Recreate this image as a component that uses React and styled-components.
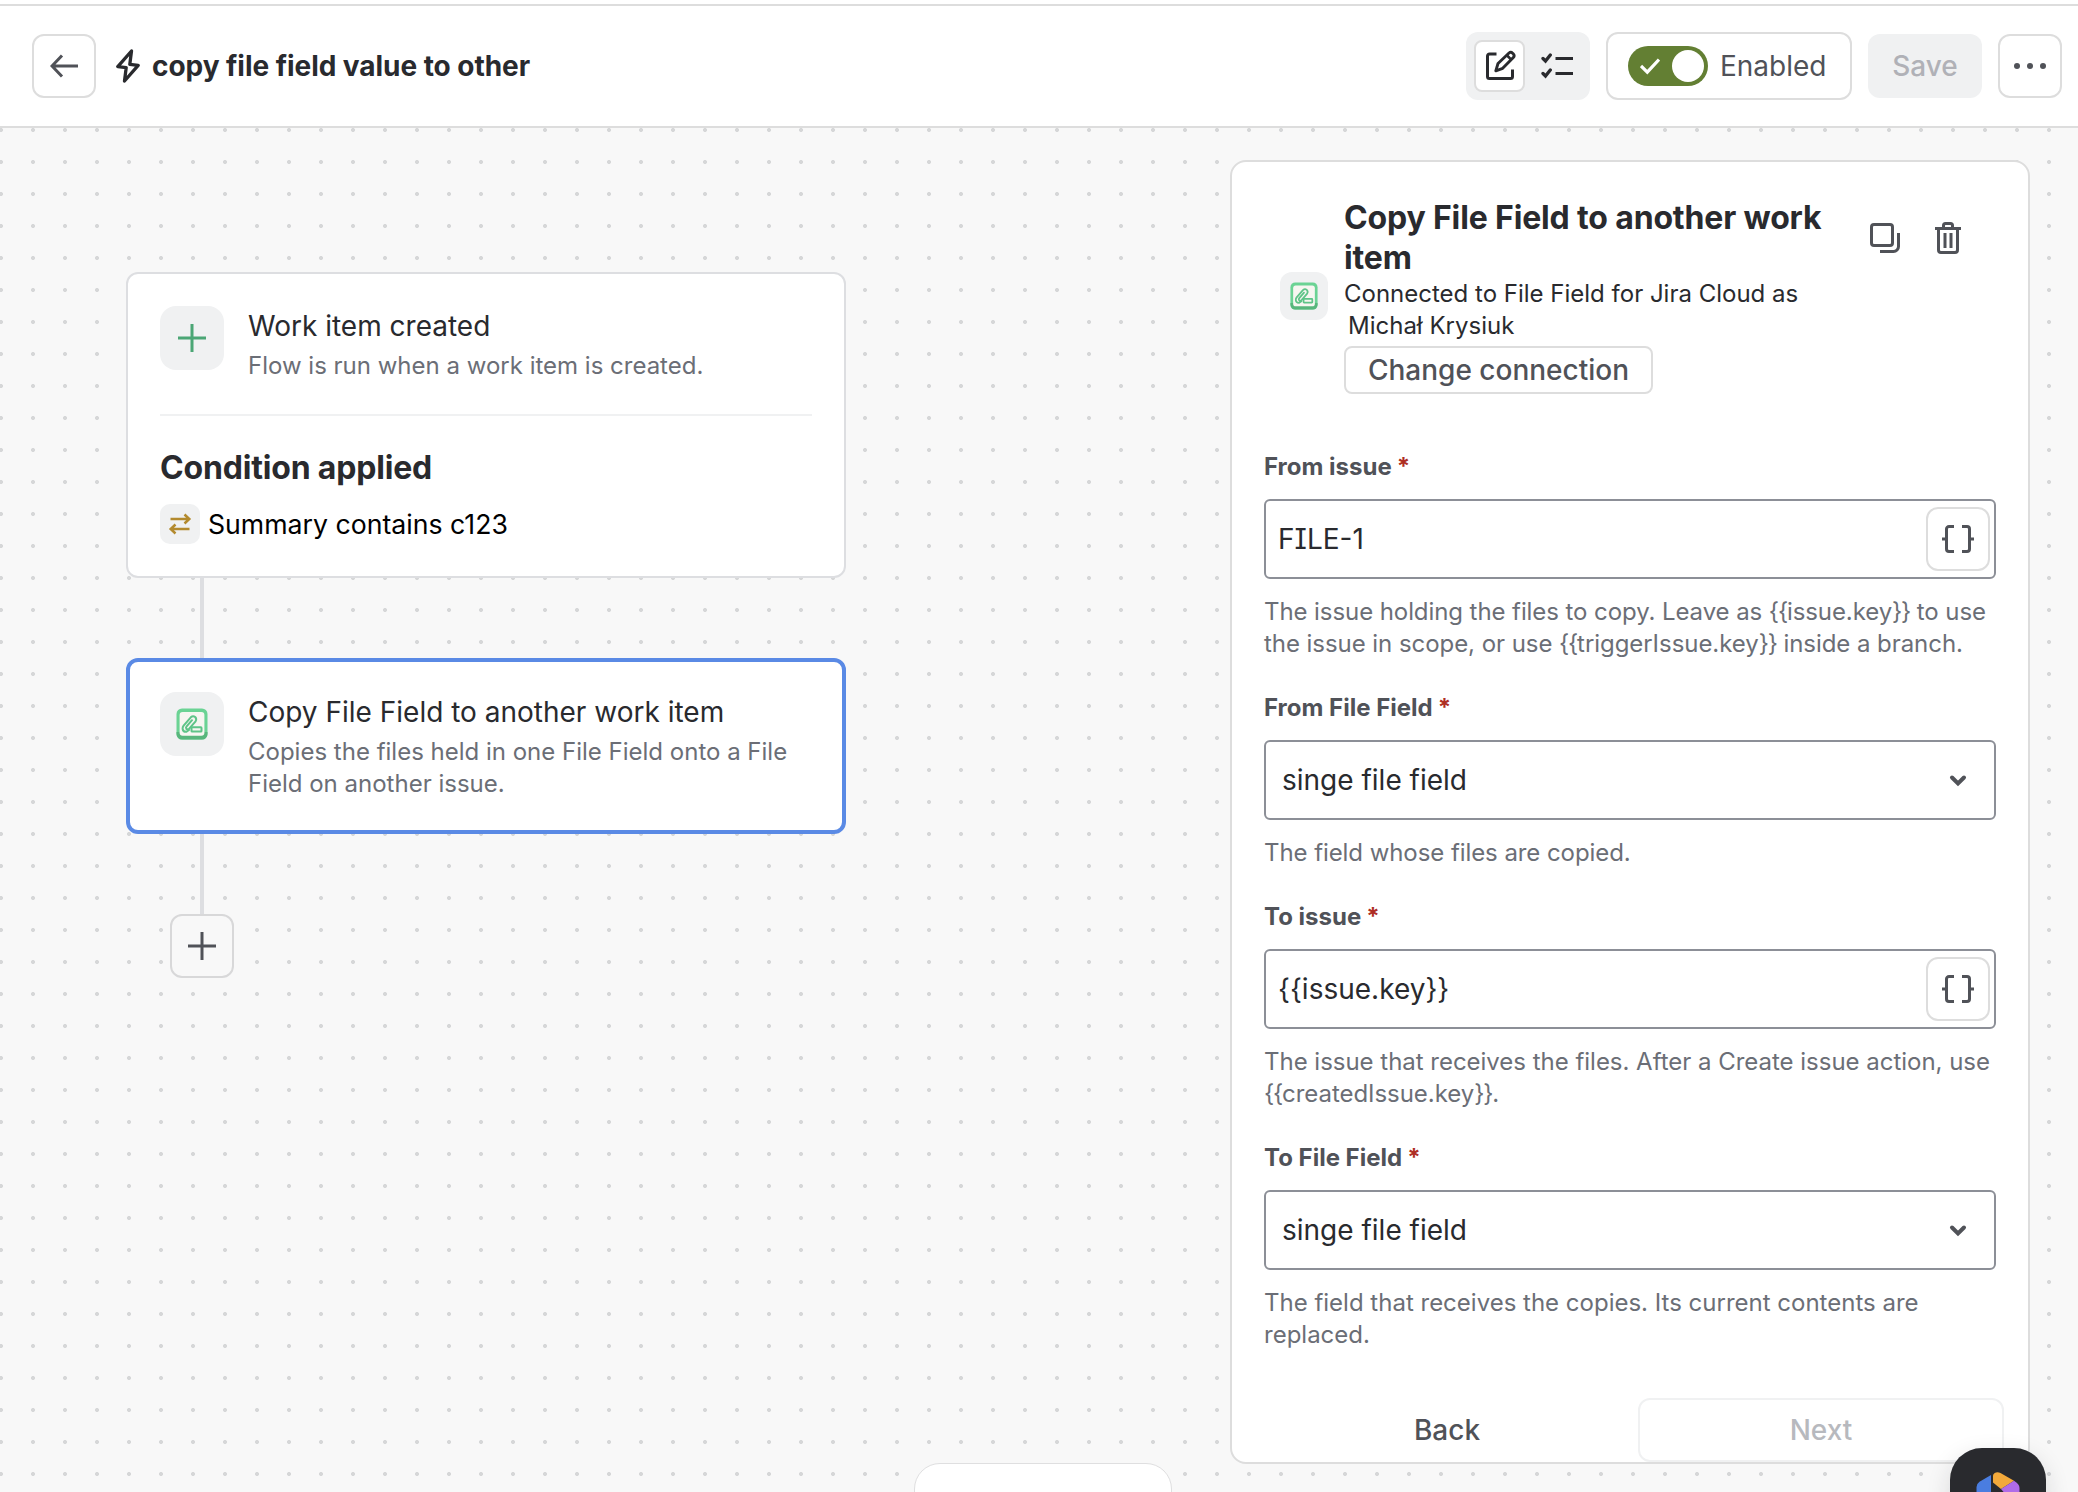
import React from "react";
import styled, { createGlobalStyle } from "styled-components";

const Global = createGlobalStyle`
  *, *::before, *::after { box-sizing: border-box; }
  html, body { margin: 0; height: 1492px; overflow: hidden; background: #fff; }
  body { font-family: Inter, "Liberation Sans", sans-serif; color: #292a2e; }
  button { font: inherit; color: inherit; padding: 0; margin: 0; background: none; border: 0; }
  h1, h2, h3, p { margin: 0; font-weight: 400; }
  svg { display: block; flex: none; }
`;

const Page = styled.div`
  position: relative;
  display: flex;
  flex-direction: column;
  width: 2078px;
  height: 1492px;
  padding-top: 4px;
  overflow: hidden;
`;

const TopBar = styled.header`
  flex: none;
  display: flex;
  align-items: center;
  height: 124px;
  padding: 0 16px 0 32px;
  border-top: 2px solid #dddddd;
  border-bottom: 2px solid #dddddd;
  background: #fff;
`;

const SquareButton = styled.button`
  flex: none;
  display: flex;
  align-items: center;
  justify-content: center;
  width: 64px;
  height: 64px;
  border: 2px solid #dddddd;
  border-radius: 12px;
  color: #505258;
`;

const FlowName = styled.h1`
  display: flex;
  align-items: center;
  gap: 12px;
  margin-left: 20px;
  font-size: 28px;
  line-height: 40px;
  font-weight: 650;
  letter-spacing: -0.05px;
  white-space: nowrap;
`;

const Controls = styled.div`
  display: flex;
  align-items: center;
  gap: 16px;
  margin-left: auto;
`;

const Segmented = styled.div`
  display: flex;
  gap: 6px;
  width: 124px;
  height: 68px;
  padding: 8px;
  border-radius: 12px;
  background: #f0f1f2;
`;

const Segment = styled.button`
  display: flex;
  align-items: center;
  justify-content: center;
  width: 52px;
  height: 52px;
  border-radius: 8px;
  border: 2px solid ${(p) => (p.$active ? "#dddddd" : "transparent")};
  background: ${(p) => (p.$active ? "#fff" : "transparent")};
`;

const EnabledBox = styled.div`
  display: flex;
  align-items: center;
  gap: 12px;
  width: 246px;
  height: 68px;
  padding-left: 20px;
  border: 2px solid #dddddd;
  border-radius: 12px;
  font-size: 28px;
  color: #505258;
`;

const Toggle = styled.div`
  display: flex;
  align-items: center;
  justify-content: space-between;
  width: 80px;
  height: 40px;
  padding: 0 4px 0 12px;
  border-radius: 20px;
  background: #637f33;
`;

const Knob = styled.span`
  width: 32px;
  height: 32px;
  border-radius: 50%;
  background: #fff;
`;

const SaveButton = styled.button`
  width: 114px;
  height: 64px;
  border-radius: 12px;
  background: #f0f1f2;
  color: #b0b1b7;
  font-size: 28px;
  font-weight: 500;
`;

const Canvas = styled.main`
  flex: 1;
  display: flex;
  justify-content: space-between;
  align-items: flex-start;
  padding: 32px 48px 0 126px;
  background-color: #f8f8f8;
  background-image: radial-gradient(circle at center, #d6d7d8 1.7px, rgba(214, 215, 216, 0) 2.3px);
  background-size: 32px 32px;
  background-position: -15px -14px;
`;

const Flow = styled.div`
  display: flex;
  flex-direction: column;
  width: 720px;
  padding-top: 112px;
`;

const Node = styled.section`
  padding: ${(p) => (p.$selected ? 30 : 32)}px;
  border: ${(p) => (p.$selected ? "4px solid #5a8ae5" : "2px solid #dddee1")};
  border-radius: 12px;
  background: #fff;
`;

const NodeHead = styled.div`
  display: flex;
  gap: 24px;
`;

const Tile = styled.span`
  flex: none;
  display: flex;
  align-items: center;
  justify-content: center;
  width: ${(p) => p.$size}px;
  height: ${(p) => p.$size}px;
  border-radius: ${(p) => p.$radius}px;
  background: #f0f1f2;
  color: ${(p) => p.$color || "inherit"};
`;

const NodeTitle = styled.h2`
  font-size: 28px;
  line-height: 40px;
  white-space: nowrap;
`;

const NodeText = styled.p`
  margin-top: 4px;
  font-size: 24px;
  line-height: 32px;
  color: #6b6e76;
  white-space: nowrap;
`;

const Divider = styled.div`
  height: 2px;
  margin: 32px 0;
  background: #f0f1f2;
`;

const ConditionTitle = styled.h3`
  font-size: 32px;
  line-height: 40px;
  font-weight: 650;
  letter-spacing: -0.18px;
`;

const Condition = styled.div`
  display: flex;
  align-items: center;
  gap: 8px;
  margin-top: 16px;
  font-size: 26.667px;
  line-height: 40px;
  color: #000;
`;

const Connector = styled.div`
  width: 4px;
  height: 80px;
  margin-left: 74px;
  background: #dddee1;
`;

const AddButton = styled(SquareButton)`
  margin-left: 44px;
  background: #f8f8f8;
  border-color: #d8d8d9;
`;

const Panel = styled.aside`
  flex: none;
  width: 800px;
  height: 1304px;
  padding: 36px 32px 0;
  border: 2px solid #dddddd;
  border-radius: 16px;
  background: #fff;
`;

const PanelHead = styled.div`
  display: flex;
  align-items: center;
  gap: 16px;
  height: 196px;
  margin: 0 16px 57px;
`;

const PanelInfo = styled.div`
  flex: 1;
`;

const TitleRow = styled.div`
  display: flex;
  align-items: center;
  justify-content: space-between;
`;

const PanelTitle = styled.h2`
  font-size: 32px;
  line-height: 40px;
  font-weight: 650;
  letter-spacing: -0.15px;
  white-space: nowrap;
`;

const PanelActions = styled.div`
  display: flex;
`;

const IconButton = styled.button`
  display: flex;
  align-items: center;
  justify-content: center;
  width: 64px;
  height: 64px;
  padding-left: ${(p) => p.$shift || 0}px;
  color: #505258;
`;

const Connection = styled.p`
  padding-left: ${(p) => p.$indent || 0}px;
  font-size: 24px;
  line-height: 32px;
  white-space: nowrap;
`;

const ChangeButton = styled.button`
  display: block;
  width: 309px;
  height: 48px;
  margin-top: 4px;
  border: 2px solid #dddddd;
  border-radius: 8px;
  color: #505258;
  font-size: 28px;
  line-height: 40px;
  font-weight: 500;
`;

const Field = styled.div`
  margin-bottom: 32px;
`;

const Label = styled.label`
  display: flex;
  gap: 5px;
  font-size: 24px;
  line-height: 32px;
  font-weight: 650;
  color: #505258;
`;

const Required = styled.span`
  color: #ae2e24;
`;

const Box = styled.div`
  display: flex;
  align-items: center;
  justify-content: space-between;
  height: 80px;
  margin-top: 16px;
  padding: ${(p) => (p.$select ? "0 27px 0 16px" : "0 4px 0 12px")};
  border: 2px solid #8c8f97;
  border-radius: 6px;
  font-size: 28px;
  font-feature-settings: ${(p) => (p.$slab ? '"cv08"' : "normal")};
`;

const Help = styled.p`
  margin-top: 17px;
  font-size: 24px;
  line-height: 32px;
  color: #6b6e76;
  white-space: nowrap;
`;

const HelpLine = styled.span`
  display: block;
  letter-spacing: ${(p) => p.$track}px;
`;

const Brace = styled.span`
  letter-spacing: -1.2px;
`;

const Footer = styled.div`
  display: grid;
  grid-template-columns: 366px 366px;
  gap: 8px;
  margin-top: 47px;
`;

const FooterButton = styled.button`
  height: 64px;
  border: 2px solid ${(p) => (p.$muted ? "#f0f1f2" : "transparent")};
  border-radius: 12px;
  font-size: 28px;
  font-weight: ${(p) => (p.$muted ? 500 : 550)};
  color: ${(p) => (p.$muted ? "#b7b9be" : "#505258")};
`;

const BottomTray = styled.div`
  position: absolute;
  left: 914px;
  top: 1463px;
  width: 258px;
  height: 60px;
  border: 1px solid #dfdfe0;
  border-radius: 26px;
  background: #fff;
`;

const Assistant = styled.button`
  && {
    position: absolute;
    left: 1950px;
    top: 1448px;
    display: flex;
    justify-content: center;
    padding-top: 24px;
    width: 96px;
    height: 96px;
    border-radius: 32px;
    background: #292a2e;
    box-shadow: 0 8px 24px rgba(30, 31, 33, 0.14);
  }
`;

const stroke = { fill: "none", stroke: "currentColor", strokeWidth: 3 };

const ArrowLeft = () => (
  <svg width="28" height="24" viewBox="0 0 28 24" {...stroke}>
    <path d="M28 12H2.5M12 1.5L2 12L12 22.5" />
  </svg>
);

const Bolt = () => (
  <svg width="24" height="34" viewBox="0 0 24 34" {...stroke} strokeWidth="3.300" strokeLinejoin="round">
    <path d="M15.5 2L1.8 17.6L10.2 18.6L8.5 32L22.2 16.4L13.8 15.4Z" />
  </svg>
);

const EditIcon = () => (
  <svg width="32" height="32" viewBox="0 0 32 32" {...stroke}>
    <path d="M12.500 4H5.500A2 2 0 0 0 3.500 6V26.500A2 2 0 0 0 5.500 28.500H26.500A2 2 0 0 0 28.500 26.500V19.500" />
    <path d="M11.800 20.800L14 13.500L25 3Q26.800 1.400 28.600 3.200L29.200 3.800Q31 5.700 29.300 7.500L18.700 18.300Z" strokeWidth="2.900" strokeLinejoin="round" />
    <path d="M22.800 5.200L27 9.400" strokeWidth="2.700" />
  </svg>
);

const ChecklistIcon = () => (
  <svg width="32" height="26" viewBox="-0.500 0 32 26" {...stroke}>
    <path d="M1.500 5.500L4 8L8.800 2M1.500 20.500L4 23L8.800 17" strokeWidth="3.300" strokeLinecap="round" />
    <path d="M14 5.500H32M14 20.500H32" />
  </svg>
);

const ToggleCheck = () => (
  <svg width="20" height="17" viewBox="0 0 20 17" fill="none" stroke="#fff" strokeWidth="3.200">
    <path d="M1 8L7.300 14.200L19 1.600" />
  </svg>
);

const MoreIcon = () => (
  <svg width="34" height="8" viewBox="0 0 34 8" fill="currentColor">
    <circle cx="4" cy="4" r="3" />
    <circle cx="17" cy="4" r="3" />
    <circle cx="30" cy="4" r="3" />
  </svg>
);

const Plus = () => (
  <svg width="28" height="28" viewBox="0 0 28 28" {...stroke}>
    <path d="M14 0V28M0 14H28" />
  </svg>
);

const Swap = () => (
  <svg width="24" height="22" viewBox="0 0 24 22" {...stroke} strokeWidth="2.500">
    <path d="M2.500 6H21.500M16.500 1.500L21.300 6L16.500 10.500M21.500 16H2.500M7.500 11.500L2.700 16L7.500 20.500" />
  </svg>
);

const FileFieldIcon = ({ size }) => (
  <svg width={size} height={size} viewBox="0 0 32 32" fill="none">
    <rect x="0.500" y="0.500" width="31" height="31" rx="5.500" fill="#6bd394" />
    <path d="M0.500 24V26A5.500 5.500 0 0 0 6 31.500H26A5.500 5.500 0 0 0 31.500 26V24Z" fill="#58b67c" />
    <rect x="3.600" y="4" width="24.800" height="23.800" rx="3" fill="#f7f6f1" />
    <g stroke="#5fc488" strokeWidth="2" strokeLinecap="round" strokeLinejoin="round">
      <path d="M13 22L10.500 23.800Q7 24 6.600 20.800Q6.500 19 7.600 17.600L14.800 9.300Q17 7.300 19.200 9Q21 11 19.600 13.300L13.200 20.700Q11.500 22 10.300 20.700Q9.600 19.600 10.600 18.400L16 12.200" />
      <rect x="15.500" y="19.300" width="10" height="4.200" rx="0.600" />
    </g>
  </svg>
);

const CopyIcon = () => (
  <svg width="30" height="30" viewBox="0 0 30 30" {...stroke}>
    <rect x="1.500" y="1.500" width="21" height="21" rx="2.500" />
    <path d="M28.500 10V23.500A5 5 0 0 1 23.500 28.500H10" />
  </svg>
);

const TrashIcon = () => (
  <svg width="26" height="32" viewBox="0 0 26 32" {...stroke}>
    <path d="M0 6.500H26M8.500 6V3.500A2 2 0 0 1 10.500 1.500H15.500A2 2 0 0 1 17.500 3.500V6M3.500 7V28A2.500 2.500 0 0 0 6 30.500H20A2.500 2.500 0 0 0 22.500 28V7M10 11V26M16 11V26" />
  </svg>
);

const BracesIcon = () => (
  <svg width="32" height="28" viewBox="0 0 32 28" {...stroke}>
    <path d="M12 1.500H7A2.500 2.500 0 0 0 4.500 4V24A2.500 2.500 0 0 0 7 26.500H12M0 14H4.500M20 1.500H25A2.500 2.500 0 0 1 27.500 4V24A2.500 2.500 0 0 1 25 26.500H20M32 14H27.500" />
  </svg>
);

const Chevron = () => (
  <svg width="18" height="14" viewBox="0 0 18 14" fill="none" stroke="#505258" strokeWidth="4">
    <path d="M3 4.500L9 10.500L15 4.500" strokeLinecap="round" />
  </svg>
);

const AssistantLogo = () => (
  <svg width="44" height="50" viewBox="0 0 44 50">
    <path d="M15 3L3.500 9.800Q0.500 12 0.500 15V35Q0.500 38 3.500 40L15 46Z" fill="#4a7de0" />
    <path d="M17 4Q17 1.500 20 0.500Q22 -0.200 24.500 1L38 8.800L25 17L17 10.500Z" fill="#f2a93b" />
    <path d="M38 8.800Q43.500 12 43.500 16V34Q43.500 38 40 40L32 44V25L25 17Z" fill="#b06be8" />
  </svg>
);

const fields = [
  {
    label: "From issue",
    value: "FILE-1",
    slab: true,
    help: [
      ["The issue holding the files to copy. Leave as {{issue.key}} to use", -0.08],
      ["the issue in scope, or use {{triggerIssue.key}} inside a branch.", -0.055],
    ],
  },
  { label: "From File Field", value: "singe file field", select: true, help: [["The field whose files are copied.", -0.07]] },
  {
    label: "To issue",
    value: "{{issue.key}}",
    help: [
      ["The issue that receives the files. After a Create issue action, use", -0.02],
      ["{{createdIssue.key}}.", -0.05],
    ],
  },
  {
    label: "To File Field",
    value: "singe file field",
    select: true,
    help: [
      ["The field that receives the copies. Its current contents are", 0],
      ["replaced.", 0],
    ],
  },
];

const Lines = ({ items }) =>
  items.map((line, i) => (
    <React.Fragment key={line}>
      {i > 0 && <br />}
      {line}
    </React.Fragment>
  ));

const withBraces = (text) =>
  text.split(/(\{\{|\}\})/).map((part, i) => (i % 2 ? <Brace key={i}>{part}</Brace> : part));

export default function App() {
  return (
    <Page>
      <Global />
      <TopBar>
        <SquareButton aria-label="Back"><ArrowLeft /></SquareButton>
        <FlowName><Bolt />copy file field value to other</FlowName>
        <Controls>
          <Segmented>
            <Segment $active aria-label="Edit"><EditIcon /></Segment>
            <Segment aria-label="Audit log"><ChecklistIcon /></Segment>
          </Segmented>
          <EnabledBox>
            <Toggle><ToggleCheck /><Knob /></Toggle>
            Enabled
          </EnabledBox>
          <SaveButton>Save</SaveButton>
          <SquareButton aria-label="More"><MoreIcon /></SquareButton>
        </Controls>
      </TopBar>
      <Canvas>
        <Flow>
          <Node>
            <NodeHead>
              <Tile $size={64} $radius={16} $color="#4ba675"><Plus /></Tile>
              <div>
                <NodeTitle>Work item created</NodeTitle>
                <NodeText>Flow is run when a work item is created.</NodeText>
              </div>
            </NodeHead>
            <Divider />
            <ConditionTitle>Condition applied</ConditionTitle>
            <Condition>
              <Tile $size={40} $radius={10} $color="#b38a2e"><Swap /></Tile>
              Summary contains c123
            </Condition>
          </Node>
          <Connector />
          <Node $selected>
            <NodeHead>
              <Tile $size={64} $radius={16}><FileFieldIcon size={32} /></Tile>
              <div>
                <NodeTitle>Copy File Field to another work item</NodeTitle>
                <NodeText><Lines items={["Copies the files held in one File Field onto a File", "Field on another issue."]} /></NodeText>
              </div>
            </NodeHead>
          </Node>
          <Connector />
          <AddButton aria-label="Add step"><Plus /></AddButton>
        </Flow>
        <Panel>
          <PanelHead>
            <Tile $size={48} $radius={12}><FileFieldIcon size={28} /></Tile>
            <PanelInfo>
              <TitleRow>
                <PanelTitle><Lines items={["Copy File Field to another work", "item"]} /></PanelTitle>
                <PanelActions>
                  <IconButton $shift={2} aria-label="Duplicate"><CopyIcon /></IconButton>
                  <IconButton aria-label="Delete"><TrashIcon /></IconButton>
                </PanelActions>
              </TitleRow>
              <Connection>Connected to File Field for Jira Cloud as</Connection>
              <Connection $indent={4}>Michał Krysiuk</Connection>
              <ChangeButton>Change connection</ChangeButton>
            </PanelInfo>
          </PanelHead>
          {fields.map((f) => (
            <Field key={f.label}>
              <Label>{f.label}<Required>*</Required></Label>
              <Box $select={f.select} $slab={f.slab}>
                {f.value}
                {f.select ? <Chevron /> : <SquareButton aria-label="Insert variable"><BracesIcon /></SquareButton>}
              </Box>
              <Help>
                {f.help.map(([line, track]) => (
                  <HelpLine key={line} $track={track}>{withBraces(line)}</HelpLine>
                ))}
              </Help>
            </Field>
          ))}
          <Footer>
            <FooterButton>Back</FooterButton>
            <FooterButton $muted>Next</FooterButton>
          </Footer>
        </Panel>
      </Canvas>
      <BottomTray />
      <Assistant aria-label="Assistant"><AssistantLogo /></Assistant>
    </Page>
  );
}
